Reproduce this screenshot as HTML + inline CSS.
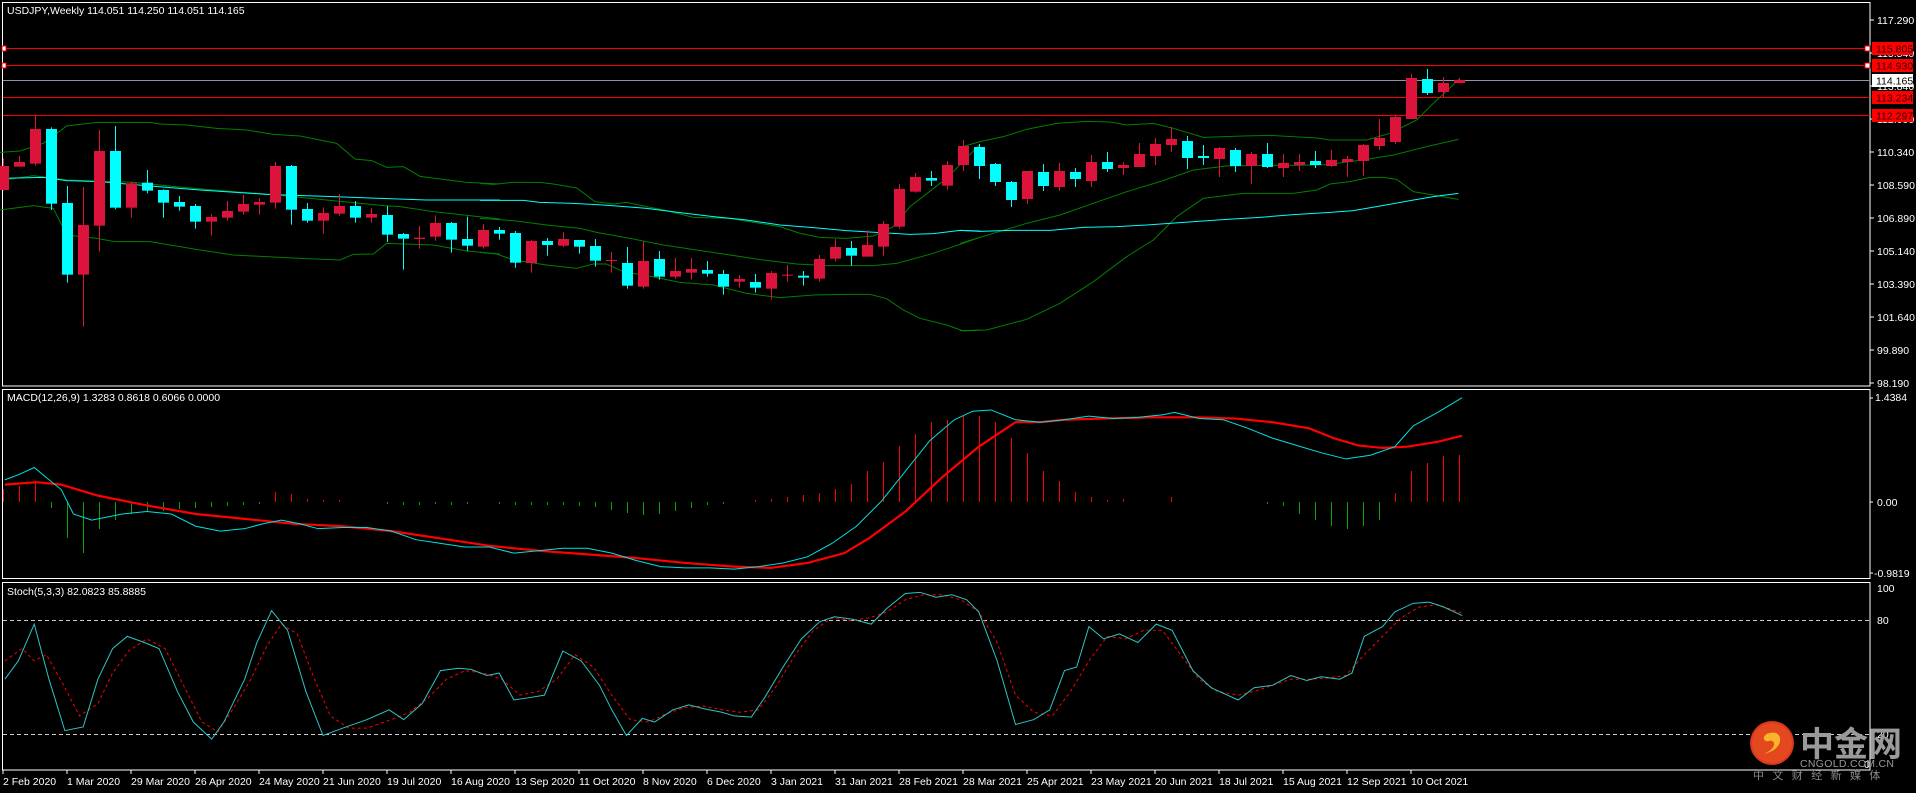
<!DOCTYPE html>
<html><head><meta charset="utf-8"><style>
html,body{margin:0;padding:0;background:#000;width:1916px;height:793px;overflow:hidden}
svg{display:block}
text{font-family:"Liberation Sans","Noto Sans CJK SC",sans-serif;font-size:10.5px;fill:#fff}
.w{vector-effect:non-scaling-stroke;fill:none}
</style></head><body>
<svg width="1916" height="793" viewBox="0 0 1916 793" xmlns="http://www.w3.org/2000/svg">
<rect width="1916" height="793" fill="#000"/>
<g fill="none" stroke="#fff" stroke-width="1">
<rect x="2.5" y="2.5" width="1867.5" height="383.5"/>
<rect x="2.5" y="389.5" width="1867.5" height="189"/>
<rect x="2.5" y="582.5" width="1867.5" height="187.5"/>
</g>
<g stroke="#fff"><path d="M1870 20h4M1870 53h4M1870 86h4M1870 119h4M1870 152h4M1870 185h4M1870 218h4M1870 251h4M1870 284h4M1870 317h4M1870 350h4M1870 383h4"/></g>
<g>
<text x="1877" y="24">117.290</text><text x="1877" y="57">115.540</text><text x="1877" y="90">113.840</text><text x="1877" y="123">112.090</text><text x="1877" y="156">110.340</text><text x="1877" y="189">108.590</text><text x="1877" y="222">106.890</text><text x="1877" y="255">105.140</text><text x="1877" y="288">103.390</text><text x="1877" y="321">101.640</text><text x="1877" y="354">99.890</text><text x="1877" y="387">98.190</text>
</g>
<path d="M3 48.5H1870M3 65.5H1870M3 97.5H1870M3 115.5H1870" stroke="#f00" stroke-width="1"/>
<path d="M3 80.5H1870" stroke="#8a96a8" stroke-width="1"/>
<rect x="1865" y="46" width="5" height="5" fill="#fff" stroke="#f00"/><rect x="1865" y="63" width="5" height="5" fill="#fff" stroke="#f00"/>
<rect x="2" y="46" width="4" height="5" fill="#fff" stroke="#f00"/><rect x="2" y="63" width="4" height="5" fill="#fff" stroke="#f00"/>
<rect x="1872" y="42" width="41" height="13" fill="#f00"/><text x="1876" y="52.5" style="fill:#300">115.805</text>
<rect x="1872" y="59" width="41" height="13" fill="#f00"/><text x="1876" y="69.5" style="fill:#300">114.930</text>
<rect x="1872" y="74" width="41" height="13" fill="#fff"/><text x="1876" y="84.5" style="fill:#000">114.165</text>
<rect x="1872" y="91" width="41" height="13" fill="#f00"/><text x="1876" y="101.5" style="fill:#300">113.234</text>
<rect x="1872" y="109" width="41" height="13" fill="#f00"/><text x="1876" y="119.5" style="fill:#300">112.297</text>
<text x="7" y="14">USDJPY,Weekly  114.051 114.250 114.051 114.165</text>

<g transform="translate(0,110) scale(0.33333)">
<polyline class="w" stroke="#008000" points="0,127 60,123 130,100 200,48 290,37 450,37 480,42 560,45 650,55 740,60 820,73 900,78 1010,100 1065,147 1115,152 1160,172 1210,170 1260,199 1400,217 1500,222"/>
<polyline class="w" stroke="#008000" points="0,212 100,197 200,210 400,217 550,232 700,245 800,252 900,262 1150,287 1200,290 1300,305 1500,327"/>
<polyline class="w" stroke="#008000" points="0,300 100,287 160,295 200,375 290,385 340,394 450,395 600,420 700,435 900,445 1020,450 1060,433 1120,432 1160,400 1300,405 1400,423 1500,432"/>
<polyline class="w" stroke="#00ffff" points="0,205 130,202 200,212 300,215 450,228 600,240 800,253 1000,260 1140,265 1280,270 1500,270"/>
</g>
<g transform="translate(480,110) scale(0.33333)">
<polyline class="w" stroke="#008000" points="0,220 40,223 100,217 180,217 220,222 290,234 345,275 400,282 440,277 500,290 560,302 640,322 750,325 840,340 900,350 960,370 1020,382 1100,385 1180,378 1240,350 1290,290 1400,205 1500,103"/>
<polyline class="w" stroke="#00ffff" points="0,271 130,271 180,277 280,280 370,285 500,295 600,308 700,320 800,330 900,345 1000,353 1100,362 1200,368 1290,373 1360,371 1440,361 1500,363"/>
<polyline class="w" stroke="#008000" points="0,325 100,332 200,345 300,355 350,367 450,385 550,405 650,420 750,435 850,450 950,462 1040,467 1180,467 1250,460 1350,433 1450,400 1500,382"/>
<polyline class="w" stroke="#008000" points="0,427 50,432 100,450 200,465 290,475 340,462 380,462 430,485 500,497 600,517 700,525 800,550 900,563 1000,555 1100,553 1170,553 1220,566 1270,600 1320,625 1400,645 1450,663 1500,660"/>
</g>
<g transform="translate(960,60) scale(0.33333)">
<polyline class="w" stroke="#008000" points="0,262 60,245 130,230 200,208 290,190 380,184 450,186 500,195 580,190 640,205 730,232 850,228 930,226 1070,234 1110,240 1220,240 1290,220 1340,195 1370,180 1420,130 1500,55"/>
<polyline class="w" stroke="#008000" points="0,550 100,520 200,490 300,465 400,430 500,395 600,365 700,330 800,318 900,316 1000,316 1100,314 1220,298 1300,285 1400,260 1495,238"/>
<polyline class="w" stroke="#008000" points="0,812 80,810 200,778 300,730 400,665 500,590 580,540 650,470 730,415 850,400 1000,400 1070,390 1110,372 1170,365 1230,352 1270,352 1310,358 1360,395 1420,405 1495,418"/>
<polyline class="w" stroke="#00ffff" points="0,511 60,514 150,511 270,511 370,502 470,500 560,495 660,488 800,478 900,472 1000,464 1100,458 1180,452 1250,440 1350,422 1420,410 1495,400"/>
</g>

<g transform="translate(0,110) scale(1,0.33333)">
<g fill="#dc143c">
<rect x="3" y="145" width="1" height="97"/><rect x="-2" y="168" width="11" height="72"/>
<rect x="19" y="138" width="1" height="32"/><rect x="14" y="156" width="11" height="14"/>
<rect x="35" y="18" width="1" height="149"/><rect x="30" y="57" width="11" height="104"/>
<rect x="83" y="231" width="1" height="419"/><rect x="78" y="345" width="11" height="149"/>
<rect x="99" y="60" width="1" height="365"/><rect x="94" y="123" width="11" height="224"/>
<rect x="131" y="215" width="1" height="108"/><rect x="126" y="220" width="11" height="73"/>
<rect x="211" y="312" width="1" height="65"/><rect x="206" y="321" width="11" height="14"/>
<rect x="227" y="273" width="1" height="59"/><rect x="222" y="303" width="11" height="20"/>
<rect x="243" y="255" width="1" height="59"/><rect x="238" y="282" width="11" height="23"/>
<rect x="259" y="264" width="1" height="50"/><rect x="254" y="276" width="11" height="8"/>
<rect x="275" y="156" width="1" height="140"/><rect x="270" y="168" width="11" height="110"/>
<rect x="323" y="292" width="1" height="79"/><rect x="318" y="309" width="11" height="23"/>
<rect x="339" y="252" width="1" height="65"/><rect x="334" y="288" width="11" height="23"/>
<rect x="371" y="294" width="1" height="44"/><rect x="366" y="312" width="11" height="11"/>
<rect x="419" y="348" width="1" height="68"/><rect x="414" y="383" width="11" height="4"/>
<rect x="435" y="316" width="1" height="76"/><rect x="430" y="339" width="11" height="41"/>
<rect x="483" y="342" width="1" height="74"/><rect x="478" y="360" width="11" height="50"/>
<rect x="531" y="390" width="1" height="98"/><rect x="526" y="393" width="11" height="66"/>
<rect x="563" y="366" width="1" height="45"/><rect x="558" y="387" width="11" height="20"/>
<rect x="611" y="426" width="1" height="62"/><rect x="606" y="450" width="11" height="3"/>
<rect x="643" y="394" width="1" height="142"/><rect x="638" y="453" width="11" height="77"/>
<rect x="675" y="444" width="1" height="62"/><rect x="670" y="483" width="11" height="17"/>
<rect x="691" y="444" width="1" height="65"/><rect x="686" y="477" width="11" height="11"/>
<rect x="739" y="495" width="1" height="38"/><rect x="734" y="507" width="11" height="8"/>
<rect x="771" y="483" width="1" height="86"/><rect x="766" y="489" width="11" height="47"/>
<rect x="787" y="465" width="1" height="50"/><rect x="782" y="494" width="11" height="3"/>
<rect x="819" y="435" width="1" height="80"/><rect x="814" y="447" width="11" height="59"/>
<rect x="835" y="387" width="1" height="68"/><rect x="830" y="411" width="11" height="35"/>
<rect x="867" y="360" width="1" height="80"/><rect x="862" y="405" width="11" height="35"/>
<rect x="883" y="333" width="1" height="104"/><rect x="878" y="342" width="11" height="68"/>
<rect x="899" y="222" width="1" height="134"/><rect x="894" y="237" width="11" height="113"/>
<rect x="915" y="189" width="1" height="59"/><rect x="910" y="201" width="11" height="44"/>
<rect x="947" y="153" width="1" height="86"/><rect x="942" y="165" width="11" height="62"/>
</g>
<g fill="#00ffff">
<rect x="51" y="52" width="1" height="248"/><rect x="46" y="57" width="11" height="224"/>
<rect x="67" y="228" width="1" height="290"/><rect x="62" y="279" width="11" height="215"/>
<rect x="115" y="48" width="1" height="250"/><rect x="110" y="123" width="11" height="170"/>
<rect x="147" y="180" width="1" height="70"/><rect x="142" y="218" width="11" height="24"/>
<rect x="163" y="238" width="1" height="85"/><rect x="158" y="240" width="11" height="38"/>
<rect x="179" y="258" width="1" height="44"/><rect x="174" y="276" width="11" height="14"/>
<rect x="195" y="282" width="1" height="74"/><rect x="190" y="288" width="11" height="47"/>
<rect x="291" y="165" width="1" height="179"/><rect x="286" y="168" width="11" height="131"/>
<rect x="307" y="279" width="1" height="59"/><rect x="302" y="297" width="11" height="35"/>
<rect x="355" y="273" width="1" height="65"/><rect x="350" y="288" width="11" height="35"/>
<rect x="387" y="288" width="1" height="108"/><rect x="382" y="315" width="11" height="59"/>
<rect x="403" y="369" width="1" height="110"/><rect x="398" y="372" width="11" height="14"/>
<rect x="451" y="336" width="1" height="92"/><rect x="446" y="339" width="11" height="50"/>
<rect x="467" y="320" width="1" height="102"/><rect x="462" y="387" width="11" height="20"/>
<rect x="499" y="351" width="1" height="38"/><rect x="494" y="360" width="11" height="11"/>
<rect x="515" y="363" width="1" height="110"/><rect x="510" y="369" width="11" height="89"/>
<rect x="547" y="384" width="1" height="53"/><rect x="542" y="393" width="11" height="12"/>
<rect x="579" y="390" width="1" height="41"/><rect x="574" y="390" width="11" height="20"/>
<rect x="595" y="387" width="1" height="83"/><rect x="590" y="408" width="11" height="44"/>
<rect x="627" y="411" width="1" height="125"/><rect x="622" y="459" width="11" height="68"/>
<rect x="659" y="423" width="1" height="86"/><rect x="654" y="447" width="11" height="53"/>
<rect x="707" y="453" width="1" height="47"/><rect x="702" y="480" width="11" height="11"/>
<rect x="723" y="480" width="1" height="74"/><rect x="718" y="492" width="11" height="38"/>
<rect x="755" y="492" width="1" height="56"/><rect x="750" y="516" width="11" height="17"/>
<rect x="803" y="483" width="1" height="44"/><rect x="798" y="497" width="11" height="6"/>
<rect x="851" y="393" width="1" height="74"/><rect x="846" y="414" width="11" height="23"/>
<rect x="931" y="183" width="1" height="45"/><rect x="926" y="204" width="11" height="8"/>
</g>
</g>
<g fill="#dc143c">
<rect x="963" y="140" width="1" height="31"/><rect x="958" y="146" width="11" height="19"/>
<rect x="1027" y="171" width="1" height="33"/><rect x="1022" y="171" width="11" height="28"/>
<rect x="1059" y="163" width="1" height="28"/><rect x="1054" y="171" width="11" height="16"/>
<rect x="1091" y="155" width="1" height="32"/><rect x="1086" y="162" width="11" height="19"/>
<rect x="1123" y="162" width="1" height="13"/><rect x="1118" y="165" width="11" height="3"/>
<rect x="1139" y="143" width="1" height="24"/><rect x="1134" y="154" width="11" height="13"/>
<rect x="1155" y="138" width="1" height="27"/><rect x="1150" y="144" width="11" height="12"/>
<rect x="1171" y="127" width="1" height="25"/><rect x="1166" y="139" width="11" height="6"/>
<rect x="1219" y="147" width="1" height="30"/><rect x="1214" y="148" width="11" height="11"/>
<rect x="1251" y="152" width="1" height="32"/><rect x="1246" y="154" width="11" height="12"/>
<rect x="1283" y="154" width="1" height="23"/><rect x="1278" y="163" width="11" height="5"/>
<rect x="1299" y="154" width="1" height="17"/><rect x="1294" y="162" width="11" height="3"/>
<rect x="1331" y="150" width="1" height="17"/><rect x="1326" y="160" width="11" height="6"/>
<rect x="1347" y="156" width="1" height="21"/><rect x="1342" y="159" width="11" height="3"/>
<rect x="1363" y="144" width="1" height="32"/><rect x="1358" y="145" width="11" height="16"/>
<rect x="1379" y="119" width="1" height="31"/><rect x="1374" y="138" width="11" height="8"/>
<rect x="1395" y="116" width="1" height="28"/><rect x="1390" y="117" width="11" height="25"/>
<rect x="1411" y="74" width="1" height="45"/><rect x="1406" y="78" width="11" height="41"/>
<rect x="1443" y="77" width="1" height="20"/><rect x="1438" y="83" width="11" height="9"/>
<rect x="1459" y="78" width="1" height="5"/><rect x="1454" y="80" width="11" height="3"/>
</g>
<g fill="#00ffff">
<rect x="979" y="144" width="1" height="35"/><rect x="974" y="147" width="11" height="19"/>
<rect x="995" y="163" width="1" height="23"/><rect x="990" y="164" width="11" height="18"/>
<rect x="1011" y="181" width="1" height="26"/><rect x="1006" y="182" width="11" height="18"/>
<rect x="1043" y="164" width="1" height="27"/><rect x="1038" y="172" width="11" height="14"/>
<rect x="1075" y="168" width="1" height="19"/><rect x="1070" y="172" width="11" height="7"/>
<rect x="1107" y="152" width="1" height="20"/><rect x="1102" y="162" width="11" height="7"/>
<rect x="1187" y="136" width="1" height="33"/><rect x="1182" y="141" width="11" height="17"/>
<rect x="1203" y="145" width="1" height="20"/><rect x="1198" y="156" width="11" height="2"/>
<rect x="1235" y="148" width="1" height="24"/><rect x="1230" y="150" width="11" height="16"/>
<rect x="1267" y="143" width="1" height="25"/><rect x="1262" y="154" width="11" height="13"/>
<rect x="1315" y="151" width="1" height="17"/><rect x="1310" y="161" width="11" height="4"/>
<rect x="1427" y="69" width="1" height="26"/><rect x="1422" y="79" width="11" height="14"/>
</g>

<text x="7" y="401">MACD(12,26,9) 1.3283 0.8618 0.6066 0.0000</text>
<path d="M1870 398h3M1870 502h3M1870 573h3" stroke="#fff"/>
<text x="1875" y="401">1.4384</text><text x="1877" y="506">0.00</text><text x="1874" y="577">-0.9819</text>
<g fill="#f00">
<rect x="3" y="489" width="1" height="13"/><rect x="19" y="486" width="1" height="16"/><rect x="35" y="483" width="1" height="19"/>
<rect x="275" y="492" width="1" height="10"/><rect x="291" y="494" width="1" height="8"/><rect x="307" y="499" width="1" height="3"/><rect x="323" y="500" width="1" height="2"/><rect x="339" y="500" width="1" height="2"/>
<rect x="755" y="500" width="1" height="2"/><rect x="771" y="499" width="1" height="3"/><rect x="787" y="497" width="1" height="5"/><rect x="803" y="495" width="1" height="7"/><rect x="819" y="493" width="1" height="9"/><rect x="835" y="489" width="1" height="13"/><rect x="851" y="484" width="1" height="18"/><rect x="867" y="471" width="1" height="31"/><rect x="883" y="462" width="1" height="40"/><rect x="899" y="446" width="1" height="56"/><rect x="915" y="434" width="1" height="68"/><rect x="931" y="422" width="1" height="80"/><rect x="947" y="420" width="1" height="82"/><rect x="963" y="416" width="1" height="86"/><rect x="979" y="416" width="1" height="86"/><rect x="995" y="422" width="1" height="80"/><rect x="1011" y="438" width="1" height="64"/><rect x="1027" y="453" width="1" height="49"/><rect x="1043" y="471" width="1" height="31"/><rect x="1059" y="481" width="1" height="21"/><rect x="1075" y="492" width="1" height="10"/><rect x="1091" y="497" width="1" height="5"/><rect x="1107" y="500" width="1" height="2"/><rect x="1123" y="499" width="1" height="3"/><rect x="1171" y="497" width="1" height="5"/>
<rect x="1395" y="493" width="1" height="9"/><rect x="1411" y="471" width="1" height="31"/><rect x="1427" y="463" width="1" height="39"/><rect x="1443" y="456" width="1" height="46"/><rect x="1459" y="455" width="1" height="47"/>
</g>
<g fill="#0a0">
<rect x="51" y="502" width="1" height="6"/><rect x="67" y="502" width="1" height="36"/><rect x="83" y="502" width="1" height="51"/><rect x="99" y="502" width="1" height="27"/><rect x="115" y="502" width="1" height="18"/><rect x="131" y="502" width="1" height="12"/><rect x="147" y="502" width="1" height="10"/><rect x="163" y="502" width="1" height="9"/><rect x="179" y="502" width="1" height="7"/><rect x="195" y="502" width="1" height="6"/><rect x="211" y="502" width="1" height="5"/><rect x="227" y="502" width="1" height="4"/><rect x="243" y="502" width="1" height="3"/><rect x="259" y="502" width="1" height="2"/>
<rect x="387" y="502" width="1" height="2"/><rect x="403" y="502" width="1" height="3"/><rect x="419" y="502" width="1" height="3"/><rect x="435" y="502" width="1" height="2"/><rect x="451" y="502" width="1" height="3"/><rect x="467" y="502" width="1" height="2"/><rect x="499" y="502" width="1" height="2"/><rect x="515" y="502" width="1" height="3"/><rect x="531" y="502" width="1" height="3"/><rect x="547" y="502" width="1" height="3"/><rect x="563" y="502" width="1" height="3"/><rect x="579" y="502" width="1" height="4"/><rect x="595" y="502" width="1" height="5"/><rect x="611" y="502" width="1" height="8"/><rect x="627" y="502" width="1" height="11"/><rect x="643" y="502" width="1" height="13"/><rect x="659" y="502" width="1" height="12"/><rect x="675" y="502" width="1" height="9"/><rect x="691" y="502" width="1" height="6"/><rect x="707" y="502" width="1" height="3"/><rect x="723" y="502" width="1" height="2"/>
<rect x="1267" y="502" width="1" height="2"/><rect x="1283" y="502" width="1" height="4"/><rect x="1299" y="502" width="1" height="12"/><rect x="1315" y="502" width="1" height="18"/><rect x="1331" y="502" width="1" height="24"/><rect x="1347" y="502" width="1" height="27"/><rect x="1363" y="502" width="1" height="24"/><rect x="1379" y="502" width="1" height="18"/>
</g>
<g transform="scale(1.2235,1.2238)">
<polyline class="w" stroke="#f00" stroke-width="2.2" points="4,396 30,394 50,396 80,405 120,413 160,420 200,424 240,428 280,430 320,434 360,440 400,446 440,450 480,453 520,456 560,460 600,463 630,464 660,460 690,452 710,440 740,418 770,390 800,365 830,345 850,345 870,343 900,342 940,341 980,341 1010,342 1040,345 1070,350 1090,358 1110,364 1130,366 1150,365 1175,361 1195,356"/>
<polyline class="w" stroke="#00e0e0" points="4,392 15,388 28,382 40,392 50,400 60,420 75,425 100,420 120,418 140,420 160,430 180,434 200,432 215,428 230,425 245,428 260,432 280,431 300,431 320,434 340,441 360,444 380,447 400,447 420,452 440,450 460,448 480,448 500,452 520,458 540,463 560,464 580,464 600,465 620,463 640,460 660,455 680,444 700,430 720,410 740,385 760,360 780,343 795,336 810,335 830,343 850,345 870,343 890,340 910,342 930,341 950,339 960,337 980,342 1000,343 1020,350 1040,358 1060,364 1080,370 1100,375 1120,372 1140,365 1155,348 1175,337 1195,325"/>
</g>

<text x="7" y="595">Stoch(5,3,3) 82.0823 85.8885</text>
<path d="M3 620.5H1870M3 734.5H1870" stroke="#ccc" stroke-dasharray="4,3"/>
<text x="1877" y="592">100</text><text x="1877" y="624">80</text><text x="1877" y="738">20</text><text x="1864" y="768">0</text>
<g transform="scale(1.2235,1.2238)">
<polyline class="w" stroke="#f00" stroke-dasharray="3,3" points="4,540 18,530 28,540 38,535 52,560 65,585 80,575 92,550 105,532 120,522 135,530 150,560 165,590 178,598 190,580 205,555 218,528 230,510 243,518 255,550 270,585 285,595 300,595 320,588 335,582 350,570 365,555 380,548 395,550 410,555 425,568 440,565 455,555 470,535 485,545 500,568 515,588 530,590 545,583 560,578 575,577 590,580 605,582 620,580 635,560 650,535 665,515 680,505 695,507 710,505 725,500 740,490 755,486 770,486 785,490 800,500 815,525 830,568 845,582 860,585 875,565 890,540 905,520 920,522 935,515 950,515 965,535 980,555 995,565 1012,568 1025,565 1040,560 1055,555 1070,555 1085,554 1100,552 1115,535 1130,520 1145,505 1160,496 1175,494 1195,501"/>
<polyline class="w" stroke="#2ec4c4" points="4,555 15,540 28,510 40,555 53,597 68,594 80,555 92,530 104,520 118,525 130,530 145,565 158,590 173,604 183,590 200,555 210,525 222,499 235,515 250,565 264,601 280,595 300,588 318,580 330,588 345,575 360,548 375,546 385,547 398,552 408,550 420,572 433,570 445,568 460,532 475,540 490,560 500,580 512,601 525,587 535,590 550,580 563,576 575,579 590,582 600,585 614,586 625,570 640,545 655,522 670,508 682,504 697,506 712,510 725,497 740,485 752,484 765,488 778,486 790,490 800,500 815,540 830,592 845,588 858,580 870,548 880,545 890,512 902,522 915,518 930,525 945,510 958,515 975,548 990,562 1012,572 1025,562 1040,560 1055,552 1068,556 1080,553 1095,555 1105,550 1115,520 1130,512 1140,500 1155,493 1168,492 1180,496 1195,503"/>
</g>

<path d="M3 770v4M67 770v4M131 770v4M195 770v4M259 770v4M323 770v4M387 770v4M451 770v4M515 770v4M579 770v4M643 770v4M707 770v4M771 770v4M835 770v4M899 770v4M963 770v4M1027 770v4M1091 770v4M1155 770v4M1219 770v4M1283 770v4M1347 770v4M1411 770v4" stroke="#fff"/>
<g style="font-size:10px">
<text x="3" y="785">2 Feb 2020</text><text x="67" y="785">1 Mar 2020</text><text x="131" y="785">29 Mar 2020</text><text x="195" y="785">26 Apr 2020</text><text x="259" y="785">24 May 2020</text><text x="323" y="785">21 Jun 2020</text><text x="387" y="785">19 Jul 2020</text><text x="451" y="785">16 Aug 2020</text><text x="515" y="785">13 Sep 2020</text><text x="579" y="785">11 Oct 2020</text><text x="643" y="785">8 Nov 2020</text><text x="707" y="785">6 Dec 2020</text><text x="771" y="785">3 Jan 2021</text><text x="835" y="785">31 Jan 2021</text><text x="899" y="785">28 Feb 2021</text><text x="963" y="785">28 Mar 2021</text><text x="1027" y="785">25 Apr 2021</text><text x="1091" y="785">23 May 2021</text><text x="1155" y="785">20 Jun 2021</text><text x="1219" y="785">18 Jul 2021</text><text x="1283" y="785">15 Aug 2021</text><text x="1347" y="785">12 Sep 2021</text><text x="1411" y="785">10 Oct 2021</text>
</g>

<circle cx="1772" cy="743" r="22" fill="#d9381e"/>
<circle cx="1772" cy="743" r="20" fill="#e4481e"/>
<path d="M1770 733c6-2 11 2 10 8c-1 7-8 11-16 13c6-3 10-6 10-10c0-3-3-4-5-3c-3 1-6-1-5-4c1-2 3-4 6-4z" fill="#f6b52a"/>
<text x="1800" y="756" style="font-size:34px;font-weight:bold;fill:#9a9a9a;font-family:'Noto Sans CJK SC','WenQuanYi Zen Hei',sans-serif">中金网</text>
<text x="1800" y="767" style="font-size:10.5px;fill:#9a9a9a;letter-spacing:0.3px">CNGOLD.COM.CN</text>
<text x="1753" y="779" style="font-size:11px;fill:#8a8a8a;letter-spacing:8.4px;font-family:'Noto Sans CJK SC',sans-serif">中文财经新媒体</text>
</svg>
</body></html>
